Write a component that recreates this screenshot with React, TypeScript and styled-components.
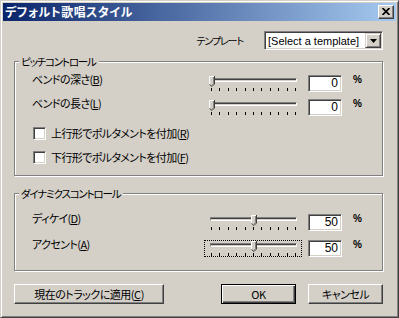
import React from "react";
import styled, { createGlobalStyle } from "styled-components";

const Global = createGlobalStyle`
  html, body { margin: 0; padding: 0; background: #D4D0C8; }
  body {
    font-family: "Noto Sans CJK JP", "Noto Sans", sans-serif;
    font-size: 11px;
    color: #000;
    font-feature-settings: "palt";
  }
  * { box-sizing: border-box; }
`;

const Window = styled.div`
  width: 399px;
  height: 318px;
  background: #d4d0c8;
  border-top: 1px solid #d4d0c8;
  border-left: 1px solid #d4d0c8;
  border-right: 1px solid #404040;
  border-bottom: 1px solid #404040;
  box-shadow: inset 1px 1px 0 #fff, inset -1px -1px 0 #808080;
  padding: 2px;
  display: flex;
  flex-direction: column;
`;

const TitleBar = styled.div`
  height: 18px;
  flex: none;
  background: linear-gradient(to right, #0a246a, #a6caf0);
  display: flex;
  align-items: center;
  justify-content: space-between;
  padding: 0 2px;
`;

const TitleText = styled.span`
  color: #fff;
  font-weight: bold;
  font-size: 12px;
  letter-spacing: 0.5px;
  line-height: 18px;
`;

const CloseButton = styled.div`
  width: 16px;
  height: 14px;
  background: #d4d0c8;
  border-top: 1px solid #fff;
  border-left: 1px solid #fff;
  border-right: 1px solid #404040;
  border-bottom: 1px solid #404040;
  box-shadow: inset -1px -1px 0 #808080;
  display: flex;
  align-items: center;
  justify-content: center;
  padding-right: 1px;
  padding-bottom: 1px;
`;

const Client = styled.div`
  flex: 1;
  display: flex;
  flex-direction: column;
  padding: 10px 13px 0 11px;
`;

const TemplateRow = styled.div`
  display: flex;
  justify-content: flex-end;
  align-items: center;
  gap: 21px;
  height: 19px;
`;

const Text = styled.span<{ $tight?: boolean }>`
  font-size: ${(p) => (p.$tight ? "10px" : "11px")};
  line-height: 13px;
  letter-spacing: ${(p) => (p.$tight ? "-1.1px" : "-0.6px")};
  white-space: nowrap;
`;

const Combo = styled.div`
  width: 119px;
  height: 19px;
  background: #fff;
  border-top: 1px solid #808080;
  border-left: 1px solid #808080;
  border-right: 1px solid #fff;
  border-bottom: 1px solid #fff;
  box-shadow: inset 1px 1px 0 #404040, inset -1px -1px 0 #d4d0c8;
  padding: 1px;
  display: flex;
  align-items: center;
`;

const ComboText = styled.span`
  flex: 1;
  font-family: "Liberation Sans", Arial, sans-serif;
  font-size: 11px;
  padding-left: 2px;
  white-space: nowrap;
`;

const RaisedButton = styled.div`
  width: 16px;
  height: 15px;
  background: #d4d0c8;
  border-top: 1px solid #d4d0c8;
  border-left: 1px solid #d4d0c8;
  border-right: 1px solid #404040;
  border-bottom: 1px solid #404040;
  box-shadow: inset 1px 1px 0 #fff, inset -1px -1px 0 #808080;
  display: flex;
  align-items: center;
  justify-content: center;
`;

const Group = styled.div<{ $height: number; $top: number; $padTop: number }>`
  position: relative;
  height: ${(p) => p.$height}px;
  margin-top: ${(p) => p.$top}px;
  border: 1px solid #808080;
  box-shadow: inset 1px 1px 0 #fff, 1px 1px 0 #fff;
  padding: ${(p) => p.$padTop}px 0 0 17px;
  display: flex;
  flex-direction: column;
`;

const Legend = styled.span`
  position: absolute;
  top: -7px;
  left: 4px;
  padding: 0 3px 0 2px;
  background: #d4d0c8;
  font-size: 10.5px;
  line-height: 13px;
  letter-spacing: -1.2px;
  white-space: nowrap;
`;

const SliderRow = styled.div<{ $gap: number }>`
  display: flex;
  align-items: flex-start;
  height: 17px;
  margin-top: ${(p) => p.$gap}px;
`;

const RowLabel = styled(Text)`
  width: 172px;
  margin-top: -2px;
`;

const SliderBox = styled.div<{ $focused?: boolean }>`
  position: relative;
  width: 98px;
  height: 17px;
  border: 1px dotted ${(p) => (p.$focused ? "#000" : "transparent")};
`;

const Track = styled.div`
  position: absolute;
  left: 5px;
  top: 2px;
  width: 87px;
  height: 4px;
  border-top: 1px solid #808080;
  border-left: 1px solid #808080;
  border-right: 1px solid #fff;
  border-bottom: 1px solid #fff;
  box-shadow: inset 0 1px 0 #404040, inset 0 -1px 0 #d4d0c8;
  background: #404040;
`;

const TickRow = styled.div`
  position: absolute;
  left: 6px;
  top: 12px;
  width: 85px;
  height: 3px;
  display: flex;
  justify-content: space-between;
`;

const Tick = styled.div`
  width: 1px;
  height: 3px;
  background: #000;
`;

const ThumbWrap = styled.div`
  position: absolute;
  top: 0;
  width: 6px;
  height: 11px;
  display: flex;
`;

const EditBox = styled.div`
  width: 34px;
  height: 17px;
  margin-left: 6px;
  background: #fff;
  border-top: 1px solid #808080;
  border-left: 1px solid #808080;
  border-right: 1px solid #fff;
  border-bottom: 1px solid #fff;
  box-shadow: inset 1px 1px 0 #404040, inset -1px -1px 0 #d4d0c8;
  text-align: right;
  padding-right: 3px;
  font-family: "Liberation Sans", Arial, sans-serif;
  font-size: 12px;
  line-height: 15px;
`;

const Percent = styled.span`
  margin-left: 11px;
  margin-top: -1px;
  font-family: "Liberation Sans", Arial, sans-serif;
  font-weight: bold;
  font-size: 10px;
  line-height: 12px;
`;

const CheckRow = styled.div<{ $gap: number }>`
  display: flex;
  align-items: center;
  gap: 5px;
  height: 13px;
  margin-top: ${(p) => p.$gap}px;
  margin-left: 1px;
`;

const CheckBox = styled.div`
  width: 13px;
  height: 13px;
  flex: none;
  background: #fff;
  border-top: 1px solid #808080;
  border-left: 1px solid #808080;
  border-right: 1px solid #fff;
  border-bottom: 1px solid #fff;
  box-shadow: inset 1px 1px 0 #404040, inset -1px -1px 0 #d4d0c8;
`;

const ButtonRow = styled.div`
  display: flex;
  height: 20px;
  margin-top: 13px;
  gap: 12px;
`;

const Spacer = styled.div`
  flex: 1;
`;

const Button = styled.div<{ $width: number; $default?: boolean }>`
  width: ${(p) => p.$width}px;
  height: 20px;
  background: #d4d0c8;
  display: flex;
  align-items: center;
  justify-content: center;
  font-size: 11px;
  letter-spacing: -0.5px;
  white-space: nowrap;
  border: 1px solid ${(p) => (p.$default ? "#000" : "transparent")};
  border-top-color: ${(p) => (p.$default ? "#000" : "#fff")};
  border-left-color: ${(p) => (p.$default ? "#000" : "#fff")};
  border-right-color: ${(p) => (p.$default ? "#000" : "#404040")};
  border-bottom-color: ${(p) => (p.$default ? "#000" : "#404040")};
  box-shadow: ${(p) =>
    p.$default
      ? "inset 1px 1px 0 #fff, inset -1px -1px 0 #404040, inset -2px -2px 0 #808080"
      : "inset -1px -1px 0 #808080"};
`;

const Thumb: React.FC<{ value: number }> = ({ value }) => (
  <ThumbWrap style={{ left: 3.5 + (value / 100) * 84 }}>
    <svg width="6" height="11" viewBox="0 0 6 11">
      <polygon points="0,0 6,0 6,8 3,11 0,8" fill="#d4d0c8" />
      <polyline points="0.5,8.5 0.5,0.5 5,0.5" fill="none" stroke="#fff" strokeWidth="1" />
      <polyline points="5.5,0 5.5,8 3,10.5 0.5,8.5" fill="none" stroke="#404040" strokeWidth="1" />
      <polyline points="4.5,1 4.5,7.6 3,9" fill="none" stroke="#808080" strokeWidth="1" />
    </svg>
  </ThumbWrap>
);

const Slider: React.FC<{ value: number; focused?: boolean }> = ({ value, focused }) => (
  <SliderBox $focused={focused}>
    <Track />
    <TickRow>
      {Array.from({ length: 11 }).map((_, i) => (
        <Tick key={i} />
      ))}
    </TickRow>
    <Thumb value={value} />
  </SliderBox>
);

const ParamRow: React.FC<{
  label: React.ReactNode;
  value: number;
  gap: number;
  focused?: boolean;
}> = ({ label, value, gap, focused }) => (
  <SliderRow $gap={gap}>
    <RowLabel>{label}</RowLabel>
    <Slider value={value} focused={focused} />
    <EditBox>{value}</EditBox>
    <Percent>%</Percent>
  </SliderRow>
);

export default function App() {
  return (
    <>
      <Global />
      <Window>
        <TitleBar>
          <TitleText>デフォルト歌唱スタイル</TitleText>
          <CloseButton>
            <svg width="8" height="7" viewBox="0 0 8 7">
              <path d="M0.5 0 L7.5 7 M7.5 0 L0.5 7" stroke="#000" strokeWidth="1.7" />
            </svg>
          </CloseButton>
        </TitleBar>
        <Client>
          <TemplateRow>
            <Text $tight>テンプレート</Text>
            <Combo>
              <ComboText>[Select a template]</ComboText>
              <RaisedButton>
                <svg width="7" height="4" viewBox="0 0 7 4">
                  <polygon points="0,0 7,0 3.5,4" fill="#000" />
                </svg>
              </RaisedButton>
            </Combo>
          </TemplateRow>

          <Group $height={115} $top={11} $padTop={13}>
            <Legend>ピッチコントロール</Legend>
            <ParamRow label={<>ベンドの深さ(<u>B</u>)</>} value={0} gap={0} />
            <ParamRow label={<>ベンドの長さ(<u>L</u>)</>} value={0} gap={7} />
            <CheckRow $gap={11}>
              <CheckBox />
              <Text>上行形でポルタメントを付加(<u>R</u>)</Text>
            </CheckRow>
            <CheckRow $gap={11}>
              <CheckBox />
              <Text>下行形でポルタメントを付加(<u>F</u>)</Text>
            </CheckRow>
          </Group>

          <Group $height={78} $top={17} $padTop={20}>
            <Legend>ダイナミクスコントロール</Legend>
            <ParamRow label={<>ディケイ(<u>D</u>)</>} value={50} gap={0} />
            <ParamRow label={<>アクセント(<u>A</u>)</>} value={50} gap={9} focused />
          </Group>

          <ButtonRow>
            <Button $width={150}>
              現在のトラックに適用(<u>C</u>)
            </Button>
            <Spacer />
            <Button $width={75} $default>
              OK
            </Button>
            <Button $width={75}>キャンセル</Button>
          </ButtonRow>
        </Client>
      </Window>
    </>
  );
}
